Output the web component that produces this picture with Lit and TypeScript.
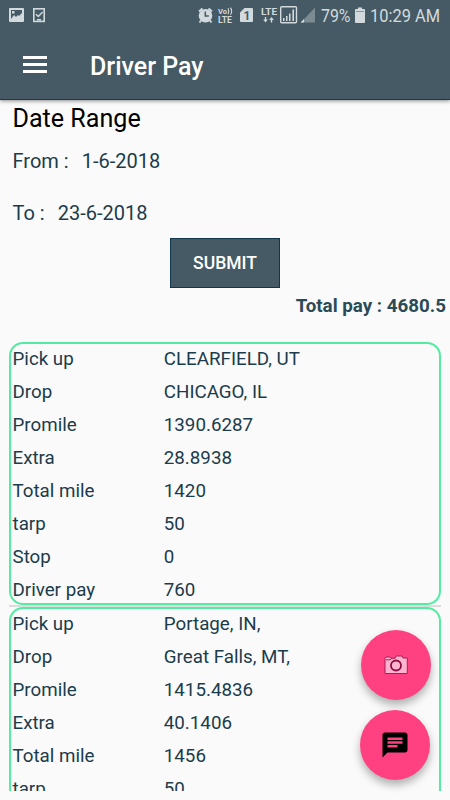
import { LitElement, html, css } from "lit";
import { customElement, property } from "lit/decorators.js";

type Row = [string, string];

const trips: Row[][] = [
  [
    ["Pick up", "CLEARFIELD, UT"],
    ["Drop", "CHICAGO, IL"],
    ["Promile", "1390.6287"],
    ["Extra", "28.8938"],
    ["Total mile", "1420"],
    ["tarp", "50"],
    ["Stop", "0"],
    ["Driver pay", "760"],
  ],
  [
    ["Pick up", "Portage, IN,"],
    ["Drop", "Great Falls, MT,"],
    ["Promile", "1415.4836"],
    ["Extra", "40.1406"],
    ["Total mile", "1456"],
    ["tarp", "50"],
  ],
];

@customElement("status-bar")
export class StatusBar extends LitElement {
  static styles = css`
    :host { display: block; height: 32px; }
    svg { display: block; font-family: Roboto, sans-serif; }
  `;
  render() {
    return html`<svg width="450" height="32" viewBox="0 0 450 32" fill="#d3dadd">
      <path fill-rule="evenodd" d="M10 8h13q1 0 1 1v12q0 1-1 1H10q-1 0-1-1V9q0-1 1-1zM11 10v9l3-4 2 2 2-2 1 1 3-3v-3zM12 11h2.5v2.5H12z"/>
      <rect x="33.8" y="8.8" width="10.4" height="12.6" fill="none" stroke="#d3dadd" stroke-width="1.6"/>
      <path d="M36 14.2l2.3 2.4 4.3-4.5M37 19.7h4" fill="none" stroke="#d3dadd" stroke-width="1.4"/>
      <circle cx="205.5" cy="15.7" r="6.8"/>
      <path d="M199 11.5l3.5-3M212 11.5l-3.5-3M201 20.5l-1.5 2M210 20.5l1.5 2" stroke="#d3dadd" stroke-width="2"/>
      <path d="M205.3 11.5v4.6h3.5" fill="none" stroke="#455a64" stroke-width="1.5"/>
      <text x="218" y="14" font-size="8" font-weight="700" textLength="9" lengthAdjust="spacingAndGlyphs">Vo</text>
      <path d="M228 8.2q1.700 3 0 6M230.500 7.600q2.300 3.600 0 7.200" fill="none" stroke="#d3dadd" stroke-width="1.1"/>
      <text x="218" y="22.800" font-size="8.500" font-weight="700" textLength="14" lengthAdjust="spacingAndGlyphs">LTE</text>
      <path d="M244.500 8H252q1 0 1 1v12q0 1-1 1H241q-1 0-1-1v-8.500z"/>
      <text x="243.600" y="19.500" font-size="12" font-weight="700" fill="#455a64">1</text>
      <text x="261" y="15" font-size="9.500" font-weight="700" textLength="16" lengthAdjust="spacingAndGlyphs">LTE</text>
      <path d="M264.800 17h1.400v2.500h1.600l-2.300 3-2.300-3h1.600zM270.800 22.500h1.400V20h1.600l-2.300-3-2.300 3h1.600z"/>
      <rect x="280.700" y="6.800" width="15.800" height="16" rx="1" fill="none" stroke="#d3dadd" stroke-width="1.4"/>
      <path d="M283 18h1.500v3H283zM286 16h1.500v5H286zM289 13.500h1.500V21H289zM292.400 9.500h1.600V21h-1.600z"/>
      <path d="M315 7.500v15h-14z" fill="#7c8b92"/>
      <path d="M304 19v3.500h-3.500z"/>
      <text x="321" y="22" font-size="19" textLength="29.500" lengthAdjust="spacingAndGlyphs">79%</text>
      <path d="M358 7.500h4V9h2q1 0 1 1v12q0 1-1 1h-8q-1 0-1-1V10q0-1 1-1h2z"/>
      <path d="M356 11.500h8" stroke="#87959b"/>
      <text x="370" y="22" font-size="19" textLength="70" lengthAdjust="spacingAndGlyphs">10:29 AM</text>
    </svg>`;
  }
}

@customElement("trip-card")
export class TripCard extends LitElement {
  @property({ attribute: false }) rows: Row[] = [];
  static styles = css`
    :host { display: block; flex: none; box-sizing: border-box; height: 263px; border: 2px solid #54eba3; border-radius: 14px; }
    .row { display: grid; grid-template-columns: 151.3px 1fr; height: 33px; line-height: 31px; padding-left: 1.5px; white-space: nowrap; }
  `;
  render() {
    return this.rows.map(([k, v]) => html`<div class="row"><span>${k}</span><span>${v}</span></div>`);
  }
}

@customElement("app-root")
export class AppRoot extends LitElement {
  static styles = css`
    :host { display: flex; flex-direction: column; position: relative; width: 450px; height: 800px; overflow: hidden; background: #fafafa; color: #1c3c4b; font: 18.75px Roboto, sans-serif; }
    header { flex: none; height: 100px; box-sizing: border-box; background: #455a64; border-bottom: 1px solid #193c4b; box-shadow: 0 1px 4px rgba(0,0,0,.45); color: #fff; }
    .bar { display: flex; align-items: center; height: 67px; padding-left: 23px; }
    .menu { display: flex; flex-direction: column; gap: 4.5px; width: 24px; margin-top: -2px; }
    .menu i { height: 2.5px; background: #fff; }
    h1 { margin: 2px 0 0 43px; font-size: 25px; font-weight: 500; line-height: 30px; }
    .form { flex: none; height: 242px; display: flex; flex-direction: column; white-space: pre; }
    h2 { margin: 4px 0 0 12.5px; font-size: 25.1px; font-weight: 400; line-height: 30px; color: #000; }
    .date { margin-left: 12.5px; font-size: 20px; line-height: 26px; display: flex; gap: 13px; }
    .from { margin-top: 14px; }
    .to { margin-top: 26px; }
    button { align-self: center; flex: none; width: 110px; height: 50px; margin: 12px 0 0; border: 1px solid #12364a; border-radius: 0; background: #455a64; color: #fff; font: 500 17.5px Roboto, sans-serif; padding: 0; }
    .total { align-self: flex-end; margin: 5px 4px 0 0; font-weight: 700; line-height: 26px; color: #2b4a57; }
    .list { flex: none; height: 449px; overflow: hidden; margin: 0 9px; }
    .divider { height: 2px; background: #dcdcdc; }
    .fab { position: absolute; width: 70px; height: 70px; border-radius: 50%; background: #ff4081; box-shadow: 0 5px 9px rgba(0,0,0,.3); display: grid; place-items: center; }
    .photo { left: 361px; top: 630px; }
    .chat { left: 360px; top: 710px; }
    .fab svg { display: block; }
  `;
  render() {
    return html`
      <header>
        <status-bar></status-bar>
        <div class="bar"><div class="menu"><i></i><i></i><i></i></div><h1>Driver Pay</h1></div>
      </header>
      <section class="form">
        <h2>Date Range</h2>
        <div class="date from"><span>From :</span><span>1-6-2018</span></div>
        <div class="date to"><span>To :</span><span>23-6-2018</span></div>
        <button>SUBMIT</button>
        <div class="total">Total pay : 4680.5</div>
      </section>
      <div class="list">
        ${trips.map((t, i) => html`${i ? html`<div class="divider"></div>` : ""}<trip-card .rows=${t}></trip-card>`)}
      </div>
      <div class="fab photo">
        <svg width="24" height="20" viewBox="0 0 24 20">
          <path d="M1 18.500V3.500L2 2h4l1 1.300h4L12 1h6l1 2h4.300v15.500z" fill="#ffb3cf" stroke="#ac1d55"/>
          <path d="M2 4.800h4l2-1.500" fill="none" stroke="#ac1d55"/>
          <circle cx="12" cy="10.500" r="5" fill="#ffb3cf" stroke="#8c0d40" stroke-width="1.8"/>
        </svg>
      </div>
      <div class="fab chat">
        <svg width="30" height="30" viewBox="0 0 24 24">
          <path d="M20 2H4c-1.100 0-1.990.9-1.990 2L2 22l4-4h14c1.100 0 2-.9 2-2V4c0-1.100-.9-2-2-2zM6 9h12v2H6V9zm8 5H6v-2h8v2zm4-6H6V6h12v2z"/>
        </svg>
      </div>`;
  }
}
